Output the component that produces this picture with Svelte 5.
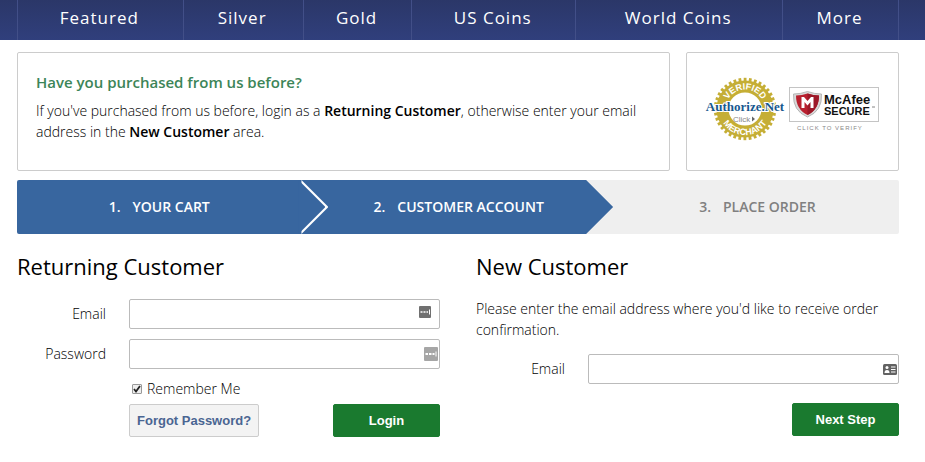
<script lang="ts">
	const categories = ['Featured', 'Silver', 'Gold', 'US Coins', 'World Coins', 'More'];

	const steps = [
		{ number: 1, label: 'Your Cart', active: true },
		{ number: 2, label: 'Customer Account', active: true },
		{ number: 3, label: 'Place Order', active: false }
	];

	// Teeth around the verified merchant seal
	const teeth = Array.from({ length: 36 }, (_, i) => i * 10);

	let email = $state('');
	let password = $state('');
	let remember = $state(true);
	let newEmail = $state('');

	function submit(e: SubmitEvent) {
		e.preventDefault();
	}
</script>

<nav class="main-nav">
	<ul>
		{#each categories as category}
			<li><a href="#{category}">{category}</a></li>
		{/each}
	</ul>
</nav>

<main class="page">
	<div class="intro">
		<section class="panel message">
			<h3>Have you purchased from us before?</h3>
			<p>
				If you've purchased from us before, login as a <strong>Returning Customer</strong>, otherwise
				enter your email address in the <strong>New Customer</strong> area.
			</p>
		</section>

		<aside class="panel badges">
			<a href="#authorize" aria-label="Authorize.Net verified merchant">
				<svg width="78" height="64" viewBox="0 0 78 64">
					<defs>
						<path id="seal-top" d="M19.500 32a19.500 19.500 0 0 1 39 0" />
						<path id="seal-bottom" d="M13 32a26 26 0 0 0 52 0" />
					</defs>
					<g fill="#c5ae35">
						{#each teeth as angle}
							<rect x="37.7" y="0.8" width="2.8" height="5" transform="rotate({angle} 39 32)" />
						{/each}
					</g>
					<circle cx="39" cy="32" r="22.5" fill="none" stroke="#c5ae35" stroke-width="12" />
					<g class="seal-text" text-anchor="middle">
						<text><textPath href="#seal-top" startOffset="50%">VERIFIED</textPath></text>
						<text><textPath href="#seal-bottom" startOffset="50%">MERCHANT</textPath></text>
					</g>
					<text class="seal-name" x="39" y="34" text-anchor="middle">Authorize.Net</text>
					<text class="seal-click" x="27" y="45">Click</text>
					<path d="M46 39.5v5l3-2.5z" fill="#666" />
				</svg>
			</a>
			<a href="#mcafee" aria-label="McAfee Secure, click to verify">
				<svg width="92" height="64" viewBox="0 0 92 64">
					<rect x="1.5" y="10.5" width="89" height="34" fill="#fff" stroke="#c4c4c4" />
					<path
						d="M5.5 17q7 0 14-2.500q7 2.500 14 2.500q1 17-14 23q-15-6-14-23z"
						fill="#d9d9d9"
						stroke="#aaa"
						stroke-width=".8"
					/>
					<path d="M8 18.500q6 0 11.500-2q5.500 2 11.500 2q0 14-11.500 19.500q-11.500-5.500-11.500-19.500z" fill="#b9202f" />
					<path d="M19.500 16.500q5.500 2 11.500 2q0 14-11.500 19.500z" fill="#9c1828" />
					<path d="M13.500 31v-11h2.500l3.500 4l3.500-4h2.500v11h-3v-6l-3 3.500l-3-3.500v6z" fill="#fff" />
					<text class="mcafee" x="36" y="27">McAfee</text>
					<text class="secure" x="36" y="38">SECURE</text>
					<path d="M84 30h3" stroke="#666" stroke-width=".8" />
					<text class="verify" x="9" y="53">CLICK TO VERIFY</text>
				</svg>
			</a>
		</aside>
	</div>

	<ol class="steps">
		{#each steps as step}
			<li class:active={step.active}>
				<span>{step.number}.</span>
				<span>{step.label}</span>
			</li>
		{/each}
	</ol>

	<div class="forms">
		<form onsubmit={submit}>
			<h2>Returning Customer</h2>
			<div class="row">
				<label for="login-email">Email</label>
				<div class="field">
					<input id="login-email" type="email" bind:value={email} />
					<svg class="hint inset" width="12" height="12" viewBox="0 0 12 12">
						<rect width="12" height="12" rx="1" fill="#707070" />
						<path d="M1.500 6h2M4.500 6h2M7.500 6h1.500" stroke="#fff" stroke-width="1.500" />
						<path d="M10.500 3.500v5" stroke="#fff" />
					</svg>
				</div>
			</div>
			<div class="row">
				<label for="login-password">Password</label>
				<div class="field">
					<input id="login-password" type="password" bind:value={password} />
					<svg class="hint" width="14" height="14" viewBox="0 0 14 14">
						<rect width="14" height="14" rx="1" fill="#a6a6a6" />
						<path d="M1.500 7h2.500M5 7h2.500M8.500 7h2" stroke="#fff" stroke-width="2" />
						<path d="M12 4.500v5" stroke="#fff" />
					</svg>
				</div>
			</div>
			<div class="remember">
				<input id="remember" type="checkbox" bind:checked={remember} />
				<label for="remember">Remember Me</label>
			</div>
			<div class="actions">
				<a class="btn-forgot" href="#forgot">Forgot Password?</a>
				<button class="btn-primary" type="submit">Login</button>
			</div>
		</form>

		<form onsubmit={submit}>
			<h2>New Customer</h2>
			<p>Please enter the email address where you'd like to receive order confirmation.</p>
			<div class="row">
				<label for="new-email">Email</label>
				<div class="field">
					<input id="new-email" type="email" bind:value={newEmail} />
					<svg class="hint" width="14" height="11" viewBox="0 0 14 11">
						<rect width="14" height="11" rx="1.500" fill="#626262" />
						<circle cx="4" cy="3.500" r="1.500" fill="#fff" />
						<path d="M1.500 9q0-3 2.500-3t2.500 3z" fill="#fff" />
						<path d="M8 3h4.500M8 5.500h4.500M8 8h4.500" stroke="#fff" />
					</svg>
				</div>
			</div>
			<div class="actions">
				<button class="btn-primary" type="submit">Next Step</button>
			</div>
		</form>
	</div>
</main>

<style>
	:global(body) {
		margin: 0;
		background: #fff;
		color: #000;
		font-family: 'Open Sans', 'Noto Sans', sans-serif;
		font-size: 14px;
		line-height: 21px;
	}

	.main-nav {
		padding: 0 26px 0 17px;
		background: linear-gradient(#2b3768, #303f7c);
	}

	.main-nav ul {
		display: table;
		width: 100%;
		margin: 0;
		padding: 0;
		box-sizing: border-box;
		border-right: 1px solid #424f88;
		list-style: none;
	}

	.main-nav li {
		display: table-cell;
		border-left: 1px solid #424f88;
		text-align: center;
	}

	.main-nav a {
		display: block;
		padding: 6px 16px 10px 14px;
		color: #fff;
		font-size: 17px;
		line-height: 24px;
		letter-spacing: 1px;
		white-space: nowrap;
		text-decoration: none;
	}

	.page {
		padding: 12px 26px 24px 17px;
	}

	.intro {
		display: grid;
		grid-template-columns: 1fr 213px;
		gap: 16px;
	}

	.panel {
		border: 1px solid #ccc;
		border-radius: 2px;
	}

	.message {
		min-height: 82px;
		padding: 17px 18px 18px;
	}

	.message h3 {
		margin: 0 0 6px;
		color: #3c8558;
		font-size: 15px;
		font-weight: 600;
		line-height: 24px;
	}

	p {
		margin: 0;
		font-weight: 300;
	}

	strong {
		font-weight: 600;
	}

	.badges {
		display: flex;
		align-items: center;
		justify-content: center;
		gap: 4px;
		padding-bottom: 6px;
	}

	.badges a,
	.badges svg {
		display: block;
		overflow: visible;
	}

	.seal-text {
		fill: #fff;
		font: bold 9px 'Liberation Sans', Arial, sans-serif;
	}

	.seal-name {
		fill: #17588f;
		stroke: #fff;
		stroke-width: 2px;
		paint-order: stroke;
		font: bold 13px 'Liberation Serif', 'Times New Roman', serif;
	}

	.seal-click {
		fill: #888;
		font: 8px 'Liberation Sans', Arial, sans-serif;
	}

	.mcafee,
	.secure {
		fill: #111;
		font: bold 13px 'Liberation Sans', Arial, sans-serif;
	}

	.secure {
		font-size: 11px;
	}

	.verify {
		fill: #888;
		font: 6px 'Liberation Sans', Arial, sans-serif;
		letter-spacing: 1px;
	}

	.steps {
		display: grid;
		grid-template-columns: 1fr 1fr 35.5%;
		margin: 9px 0 0;
		padding: 0;
		border-radius: 2px;
		overflow: hidden;
		list-style: none;
	}

	.steps li {
		position: relative;
		display: flex;
		justify-content: center;
		gap: 12px;
		padding: 16px 0 17px;
		background: #efefef;
		color: #808080;
		font-weight: 600;
		text-transform: uppercase;
	}

	.steps li + li {
		padding-left: 30px;
	}

	.steps .active {
		background: #38669f;
		color: #fff;
	}

	/* Arrow heads lie over the start of the following step */
	.steps .active::before,
	.steps .active::after {
		content: '';
		position: absolute;
		z-index: 1;
		top: 0;
		left: 100%;
		width: 27px;
		height: 100%;
		background: #38669f;
		clip-path: polygon(0 0, 100% 50%, 0 100%);
	}

	/* White line between two active steps */
	.steps .active:has(+ .active)::before {
		background: #fff;
	}

	.steps .active:has(+ .active)::after {
		left: calc(100% - 3px);
	}

	.forms {
		display: grid;
		grid-template-columns: 1fr 1fr;
		gap: 36px;
		margin-top: 17px;
	}

	h2 {
		margin: 0 0 17px;
		font-size: 22px;
		font-weight: 400;
		line-height: 30px;
	}

	.row {
		display: grid;
		grid-template-columns: 89px 1fr;
		gap: 23px;
		align-items: center;
		margin-bottom: 9px;
	}

	h2 + .row {
		margin-top: 18px;
	}

	.row + .row {
		margin-top: 10px;
	}

	.row label {
		padding-bottom: 2px;
		text-align: right;
	}

	label {
		font-weight: 300;
	}

	.field {
		position: relative;
		display: flex;
		align-items: center;
	}

	.field input {
		width: 100%;
		height: 30px;
		box-sizing: border-box;
		padding: 4px 24px 4px 8px;
		border: 1px solid #bbb;
		border-radius: 2px;
		background: #fff;
		font: inherit;
	}

	.hint {
		position: absolute;
		right: 2px;
	}

	.hint.inset {
		right: 9px;
		top: 7px;
	}

	.forms p + .row {
		margin: 14px 0 19px;
	}

	.remember {
		display: flex;
		align-items: center;
		gap: 5px;
		padding-left: 115px;
	}

	.remember input {
		appearance: none;
		width: 10px;
		height: 10px;
		margin: 0;
		border: 1px solid #999;
		border-radius: 1px;
		background: #eee;
	}

	.remember input:checked {
		background: #eee
			url("data:image/svg+xml,%3Csvg xmlns='http://www.w3.org/2000/svg' viewBox='0 0 8 8'%3E%3Cpath d='M1 4l2 2.500L7 1' fill='none' stroke='%23222' stroke-width='1.800'/%3E%3C/svg%3E")
			center / 8px 8px no-repeat;
	}

	.actions {
		display: flex;
		justify-content: flex-end;
	}

	.remember + .actions {
		justify-content: space-between;
		margin: 5px 0 0 112px;
	}

	.btn-forgot,
	.btn-primary {
		height: 33px;
		box-sizing: border-box;
		border: 1px solid #ccc;
		border-radius: 2px;
		font-family: 'Liberation Sans', Arial, sans-serif;
		font-size: 13px;
		font-weight: 700;
		line-height: 31px;
		text-align: center;
		text-decoration: none;
		cursor: pointer;
	}

	.btn-forgot {
		padding: 0 7px;
		background: #f3f3f3;
		color: #4a6592;
	}

	.btn-primary {
		width: 107px;
		padding: 0;
		border-color: #1a7a2f;
		background: #1a7a2f;
		color: #fff;
	}
</style>
